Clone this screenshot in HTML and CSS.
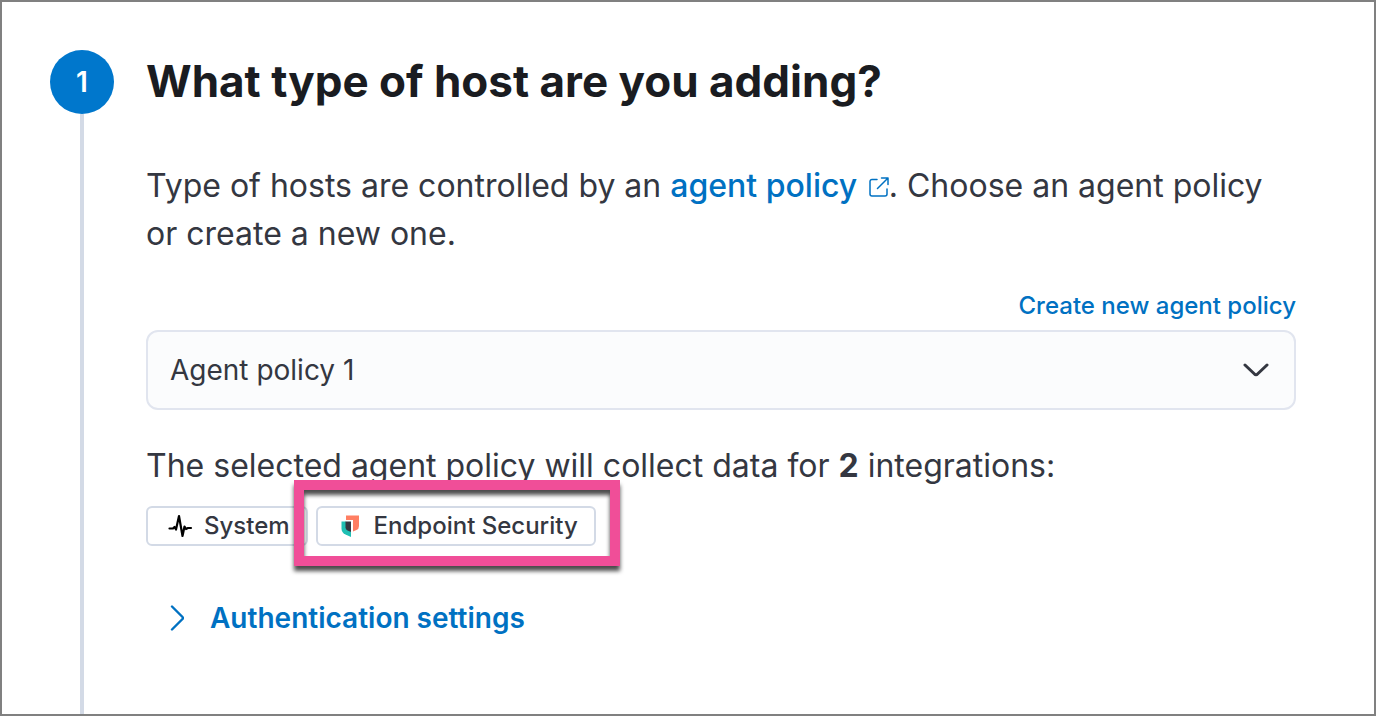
FILE: index.html
```html
<!DOCTYPE html>
<html lang="en">
<head>
    <meta charset="UTF-8">
    <meta name="viewport" content="width=device-width, initial-scale=1.0">
    <title>Add agent</title>
    <link rel="stylesheet" href="styles.css">
</head>
<body>
    <main class="step">
        <div class="step-rail">
            <span class="step-number">1</span>
            <span class="step-line"></span>
        </div>
        <section class="step-content">
            <h1 class="step-title">What type of host are you adding?</h1>

            <p class="text">Type of hosts are controlled by an <a class="link" href="#policy">agent policy <svg class="icon-external" viewBox="0 0 20 20" fill="none" stroke="currentColor" stroke-width="1.5" stroke-linecap="round" stroke-linejoin="round" aria-hidden="true"><path d="M8 2.5H3a2 2 0 0 0-2 2V17a2 2 0 0 0 2 2h13a2 2 0 0 0 2-2v-5M12.500 1H19v6.500M19 1 8.500 11.500"/></svg></a>. Choose an agent policy or create a new one.</p>

            <form class="policy-form">
                <div class="policy-label-row">
                    <a class="create-link" href="#create">Create new agent policy</a>
                </div>
                <div class="select-wrap">
                    <select class="select" id="policy" name="policy" aria-label="Agent policy">
                        <option>Agent policy 1</option>
                    </select>
                    <svg class="icon-down" viewBox="0 0 26 14" fill="none" stroke="currentColor" stroke-width="3" stroke-linecap="round" stroke-linejoin="round" aria-hidden="true"><path d="M2 2l9.500 9a2 2 0 0 0 3 0L24 2"/></svg>
                </div>
            </form>

            <p class="text">The selected agent policy will collect data for <strong>2</strong> integrations:</p>

            <div class="badges">
                <span class="badge">
                    <svg class="badge-icon" viewBox="0 0 32 32" fill="none" stroke="#000" stroke-width="2.2" stroke-linecap="round" stroke-linejoin="round" aria-hidden="true"><path d="M5.500 18.500H9l1.500-1.500 1.500 2.500 3-13.500 3.500 20 2-9.500 1.500 2.500 2-1H27"/></svg>
                    <span class="badge-text">System</span>
                </span>
                <span class="badge badge-marked">
                    <svg class="badge-icon" viewBox="0 0 32 32" aria-hidden="true">
                        <path fill="#ff7e62" d="M12 5.500h13V16q0 3-2.500 4L19 21.500V10h-7z"/>
                        <path fill="#1fbfb3" d="M7.500 11.500H12L17 22v5l-5.500-2.500q-4-2-4-6z"/>
                        <path fill="#343741" d="M11.500 11.500H17V22l-3.500-1.500q-2-1-2-3z"/>
                    </svg>
                    <span class="badge-text">Endpoint Security</span>
                </span>
            </div>

            <button class="accordion" type="button">
                <svg class="icon-right" viewBox="0 0 14 26" fill="none" stroke="currentColor" stroke-width="2.4" stroke-linecap="round" stroke-linejoin="round" aria-hidden="true"><path d="M2 1.500l10.500 10.500q1 1 0 2L2 24.500"/></svg>
                Authentication settings
            </button>
        </section>
    </main>
</body>
</html>
```

FILE: styles.css
```css
* {
    box-sizing: border-box;
}
body {
    margin: 0;
    font-family: Inter, "Liberation Sans", sans-serif;
    color: #343741;
    background-color: #fff;
}
.step {
    display: flex;
    gap: 32px;
    min-height: 100vh;
    padding: 48px 78px 0 48px;
    border: 2px solid #808080;
}
.step-rail {
    display: flex;
    flex-direction: column;
    align-items: center;
}
.step-number {
    display: flex;
    align-items: center;
    justify-content: center;
    width: 64px;
    height: 64px;
    border-radius: 50%;
    background-color: #0077cc;
    color: #fff;
    font-size: 28px;
    font-weight: 600;
}
.step-line {
    flex: 1;
    width: 4px;
    background-color: #d3dae6;
}
.step-content {
    flex: 1;
    min-width: 0;
}
.step-title {
    margin: 0 0 50px;
    font-size: 44px;
    line-height: 62px;
    font-weight: 700;
    color: #1a1c21;
}
.text {
    margin: 0;
    font-size: 32px;
    line-height: 48px;
}
.link,
.create-link {
    color: #0071c2;
    font-weight: 500;
    text-decoration: none;
}
.icon-external {
    width: 20px;
    height: 20px;
    margin-left: 3px;
}
.policy-form {
    margin: 32px 0;
}
.policy-label-row {
    display: flex;
    justify-content: flex-end;
    margin-bottom: 8px;
}
.create-link {
    font-size: 24px;
    line-height: 32px;
}
.select-wrap {
    display: grid;
    align-items: center;
}
.select,
.icon-down {
    grid-area: 1 / 1;
}
.select {
    appearance: none;
    width: 100%;
    height: 80px;
    padding: 0 80px 0 22px;
    border: 2px solid #e1e5ef;
    border-radius: 12px;
    background-color: #fbfcfd;
    color: #343741;
    font-family: inherit;
    font-size: 28px;
}
.icon-down {
    justify-self: end;
    width: 26px;
    height: 14px;
    margin-right: 27px;
    pointer-events: none;
}
.badges {
    display: flex;
    gap: 8px;
    margin-top: 16px;
}
.badge {
    display: flex;
    align-items: center;
    gap: 8px;
    height: 40px;
    padding: 0 16px;
    border: 2px solid #d3dae6;
    border-radius: 6px;
    font-size: 24px;
    line-height: 36px;
    font-weight: 500;
    white-space: nowrap;
}
.badge-icon {
    width: 32px;
    height: 32px;
}
.badge-marked {
    position: relative;
}
/* callout frame around the badge */
.badge-marked::after {
    content: "";
    position: absolute;
    top: -28px;
    right: -26px;
    bottom: -22px;
    left: -24px;
    border: 10px solid #f04e98;
    filter: drop-shadow(0 5px 2px rgba(0, 0, 0, 0.7));
}
.accordion {
    display: flex;
    align-items: center;
    gap: 26px;
    margin-top: 48px;
    padding: 0 24px;
    border: 0;
    background: none;
    color: #0071c2;
    font-family: inherit;
    font-size: 28px;
    line-height: 48px;
    font-weight: 600;
    cursor: pointer;
}
.icon-right {
    width: 14px;
    height: 26px;
}
```
